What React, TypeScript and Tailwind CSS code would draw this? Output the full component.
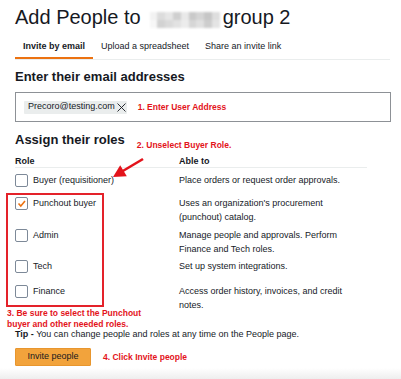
const mosaic = [
  "bg-[#f2f2f2]", "bg-[#dcdcdc]", "bg-[#e6e6e6]", "bg-[#cfcfcf]", "bg-[#e9e9e9]", "bg-[#c9c9c9]", "bg-[#d4d4d4]", "bg-[#c6c6c6]", "bg-[#dedede]",
  "bg-[#f7f7f7]", "bg-[#d2d2d2]", "bg-[#dadada]", "bg-[#e2e2e2]", "bg-[#ececec]", "bg-[#d6d6d6]", "bg-[#e0e0e0]", "bg-[#cdcdcd]", "bg-[#e4e4e4]",
];

const roles = [
  { name: "Buyer (requisitioner)", checked: false, desc: ["Place orders or request order approvals."], mt: "mt-[5px]" },
  { name: "Punchout buyer", checked: true, desc: ["Uses an organization's procurement", "(punchout) catalog."], mt: "mt-[9px]" },
  { name: "Admin", checked: false, desc: ["Manage people and approvals. Perform", "Finance and Tech roles."], mt: "mt-[4px]" },
  { name: "Tech", checked: false, desc: ["Set up system integrations."], mt: "mt-[3px]" },
  { name: "Finance", checked: false, desc: ["Access order history, invoices, and credit", "notes."], mt: "mt-[11px]" },
];

const Checkbox = ({ checked }: { checked: boolean }) => (
  <div className="mt-[1px] w-[13px] h-[13px] shrink-0 border border-[#7d8998] rounded-[2px] bg-white flex items-center justify-center">
    {checked && (
      <svg width="11" height="11" viewBox="0 0 11 11">
        <polyline points="2.5,5.5 4.8,8 9,3" fill="none" stroke="#ec7211" strokeWidth="1.6" />
      </svg>
    )}
  </div>
);

export default function App() {
  return (
    <div className="relative w-[401px] h-[379px] overflow-hidden bg-white text-[#16191f] font-['Liberation_Sans',Arial,sans-serif]">
      <div className="pl-[15px]">
        {/* Title */}
        <div className="pt-[5px] flex items-center h-[29px] text-[20px] leading-[24px]">
          <span>Add People to</span>
          <div className="ml-[9px] mt-[6px] w-[70px] h-[16px] grid grid-cols-9 blur-[1px]">
            {mosaic.map((c, i) => (
              <div key={i} className={c} />
            ))}
          </div>
          <span className="ml-[3px]">group 2</span>
        </div>

        {/* Tabs */}
        <div className="flex w-[375px] border-b border-[#eaeded] text-[9px] leading-[12px]">
          <div className="px-[8px] pt-[11px] pb-[5px] font-bold border-b-2 border-[#ec7211]">Invite by email</div>
          <div className="px-[8px] pt-[11px] pb-[5px]">Upload a spreadsheet</div>
          <div className="px-[8px] pt-[11px] pb-[5px]">Share an invite link</div>
        </div>

        {/* Email */}
        <h2 className="mt-[9px] text-[13px] leading-[16px] font-bold">Enter their email addresses</h2>
        <div className="mt-[7px] h-[30px] w-[376px] border border-[#8d9196] flex items-center pl-[8px]">
          <div className="h-[13px] bg-[#eaeded] pl-[4px] pr-[1px] flex items-center gap-[2px] text-[9px] rounded-[1px]">
            <span>Precoro@testing.com</span>
            <svg width="9" height="9" viewBox="0 0 9 9">
              <path d="M0.5 0.5 L8.5 8.5 M8.5 0.5 L0.5 8.5" stroke="#16191f" strokeWidth="0.9" />
            </svg>
          </div>
          <span className="ml-[11px] text-[8.5px] font-bold text-[#e3131b]">1. Enter User Address</span>
        </div>

        {/* Roles */}
        <div className="mt-[10px] flex items-end">
          <h2 className="text-[13px] leading-[16px] font-bold">Assign their roles</h2>
          <span className="ml-[12px] mb-[-3px] text-[8.5px] leading-[11px] font-bold text-[#e3131b]">2. Unselect Buyer Role.</span>
        </div>

        <div className="mt-[7px] grid grid-cols-[164px_1fr] w-[352px] border-b border-[#eaeded] text-[9px] leading-[12px] font-bold">
          <span>Role</span>
          <span>Able to</span>
        </div>

        {roles.map((r) => (
          <div key={r.name} className={`${r.mt} grid grid-cols-[164px_1fr] w-[352px] text-[9px] leading-[14px]`}>
            <div className="flex items-start gap-[5px]">
              <Checkbox checked={r.checked} />
              <span>{r.name}</span>
            </div>
            <div>
              {r.desc.map((d) => (
                <div key={d}>{d}</div>
              ))}
            </div>
          </div>
        ))}

        <p className="mt-[16px] text-[9px] leading-[12px]">
          <span className="font-bold">Tip -</span> You can change people and roles at any time on the People page.
        </p>

        <div className="mt-[8px] flex items-center">
          <button className="w-[76px] h-[18px] bg-[#f2a33c] border border-[#e8962e] rounded-[1px] text-[9px] text-[#16191f]">
            Invite people
          </button>
          <span className="ml-[12px] text-[8.5px] font-bold text-[#e3131b]">4. Click Invite people</span>
        </div>
      </div>

      <div className="mt-[2px] h-[11px] bg-gradient-to-b from-white to-[#eeeeee]" />

      {/* Annotation overlays */}
      <div className="absolute left-[6px] top-[193px] w-[98px] h-[114px] border-2 border-[#e4222a]" />
      <div className="absolute left-[7px] top-[308px] text-[8.5px] leading-[11px] font-bold text-[#e3131b]">
        3. Be sure to select the Punchout
        <br />
        buyer and other needed roles.
      </div>
      <svg className="absolute left-0 top-0" width="401" height="379" viewBox="0 0 401 379">
        <line x1="143" y1="159" x2="122" y2="171.5" stroke="#e3131b" strokeWidth="2.6" />
        <polygon points="113,177 120.2,165.2 126.8,176.2" fill="#e3131b" />
      </svg>
    </div>
  );
}
